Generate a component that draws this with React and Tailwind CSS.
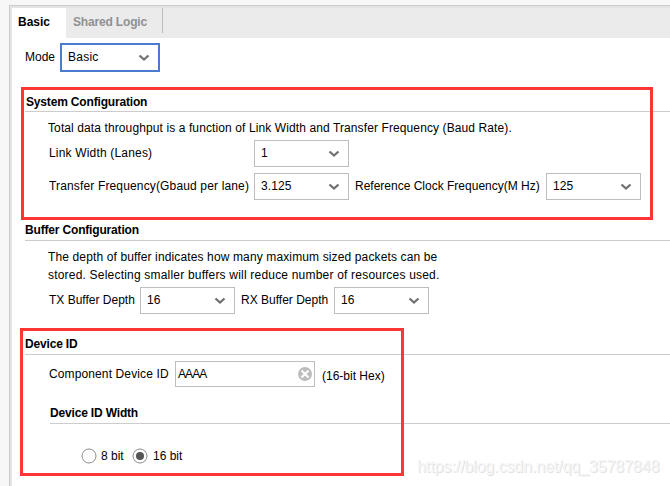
import React from 'react';

function Chevron() {
  return (
    <svg width="12" height="8" viewBox="0 0 12 8" fill="none" className="shrink-0">
      <path d="M1.5 1.5L6 5.5L10.5 1.5" stroke="#707070" strokeWidth="2.3" />
    </svg>
  );
}

function Select({ value, focused = false }) {
  return (
    <button
      type="button"
      className={
        focused
          ? 'flex h-[29px] w-[100px] shrink-0 items-center justify-between border-2 border-[#4a7bd0] bg-white pr-[8px] pb-px pl-1.5 text-left tracking-[0.25px]'
          : 'flex h-[27px] w-[95px] shrink-0 items-center justify-between border border-[#bdbdbd] bg-white pr-[8px] pb-px pl-1.5 text-left tracking-[0.1px]'
      }
    >
      <span>{value}</span>
      <span className="pt-[2px]"><Chevron /></span>
    </button>
  );
}

function Label({ className, children }) {
  return <span className={'shrink-0 whitespace-nowrap ' + className}>{children}</span>;
}

function Heading({ className = 'leading-[17px]', children }) {
  return (
    <h2 className={'h-[19px] border-b border-[#cccccc] font-bold tracking-[-0.17px] whitespace-nowrap ' + className}>
      {children}
    </h2>
  );
}

function Radio({ checked }) {
  return (
    <svg width="16" height="16" viewBox="0 0 16 16" className="shrink-0">
      <circle cx="8" cy="8" r="7" fill="white" stroke="#8c8c8c" />
      {checked && <circle cx="8" cy="8" r="4" fill="#555555" />}
    </svg>
  );
}

export default function App() {
  return (
    <div className="relative h-[486px] w-[670px] overflow-hidden bg-[#f7f7f7] pt-[5px] pl-[9px] font-['Liberation_Sans',Arial,sans-serif] text-[12px] leading-[18px] text-black">
      <div className="h-[481px] border-t border-l border-[#cbcbcb]">
        <div className="h-full border-t-2 border-l-2 border-[#e4e4e4] bg-white">
          <nav className="flex h-[30px] bg-[#ebebeb] font-bold leading-[29px]">
            <div className="w-[54px] bg-white pl-1.5">Basic</div>
            <div className="h-[25px] w-[97px] border-r border-[#bdbdbd] pl-[7px] tracking-[-0.17px] whitespace-nowrap text-[#909090]">Shared Logic</div>
          </nav>
          <div className="mt-[5px] flex h-[29px] items-center pl-[13px]">
            <Label className="w-[35px] pb-px">Mode</Label>
            <Select value="Basic" focused />
          </div>

          <section className="mt-[21px] pl-[13px]">
            <Heading className="pl-px leading-[19px]">System Configuration</Heading>
            <p className="mt-[7px] ml-[23px] tracking-[0.105px] whitespace-nowrap">
              Total data throughput is a function of Link Width and Transfer Frequency (Baud Rate).
            </p>
            <div className="mt-[3px] ml-6 flex h-[27px] items-center">
              <Label className="w-[205px] pb-px tracking-[0.18px]">Link Width (Lanes)</Label>
              <Select value="1" />
            </div>
            <div className="mt-1.5 ml-6 flex h-[27px] items-center">
              <Label className="w-[205px] pb-px tracking-[0.15px]">Transfer Frequency(Gbaud per lane)</Label>
              <Select value="3.125" />
              <Label className="ml-1.5 w-[191px] pb-px">Reference Clock Frequency(M Hz)</Label>
              <Select value="125" />
            </div>
          </section>

          <section className="mt-[22px] pl-[13px]">
            <Heading>Buffer Configuration</Heading>
            <p className="mt-[7px] ml-[23px] whitespace-nowrap">
              <span className="tracking-[0.13px]">The depth of buffer indicates how many maximum sized packets can be</span>
              <br />
              <span className="tracking-[0.2px]">stored. Selecting smaller buffers will reduce number of resources used.</span>
            </p>
            <div className="mt-[3px] ml-6 flex h-[27px] items-center">
              <Label className="w-[91px] pb-px">TX Buffer Depth</Label>
              <Select value="16" />
              <Label className="ml-1.5 w-[93px] pb-px">RX Buffer Depth</Label>
              <Select value="16" />
            </div>
          </section>

          <section className="mt-[22px] pl-[13px]">
            <Heading>Device ID</Heading>
            <div className="mt-1.5 ml-6 flex h-[26px] items-center">
              <Label className="w-[126px] tracking-[0.12px]">Component Device ID</Label>
              <div className="flex h-[26px] w-[140px] shrink-0 items-center justify-between border border-[#bdbdbd] pr-[2px] pl-[2px]">
                <span className="tracking-[-0.9px]">AAAA</span>
                <svg width="14" height="14" viewBox="0 0 14 14">
                  <circle cx="7" cy="7" r="7" fill="#bdbdbd" />
                  <path d="M3.5 3.5L10.5 10.5M10.5 3.5L3.5 10.5" stroke="white" strokeWidth="2" />
                </svg>
              </div>
              <Label className="ml-[7px] pt-1">(16-bit Hex)</Label>
            </div>
            <div className="mt-[18px] ml-[25px]">
              <Heading>Device ID Width</Heading>
              <div className="mt-6 ml-[31px] flex h-4 items-center">
                <Radio />
                <Label className="ml-1 w-[31px]">8 bit</Label>
                <Radio checked />
                <Label className="ml-[5px]">16 bit</Label>
              </div>
            </div>
          </section>
        </div>
      </div>
      <div className="absolute top-[87px] left-[21px] h-[133px] w-[632px] border-3 border-[#fc3535]" />
      <div className="absolute top-[328px] left-[20px] h-[148px] w-[384px] border-3 border-[#fc3535]" />
      <div className="absolute top-[458px] left-[417px] text-[16px] tracking-[-0.1px] whitespace-nowrap text-[#f6f6f6] [text-shadow:1px_1px_0_#e2e2e2]">
        https://blog.csdn.net/qq_35787848
      </div>
    </div>
  );
}
